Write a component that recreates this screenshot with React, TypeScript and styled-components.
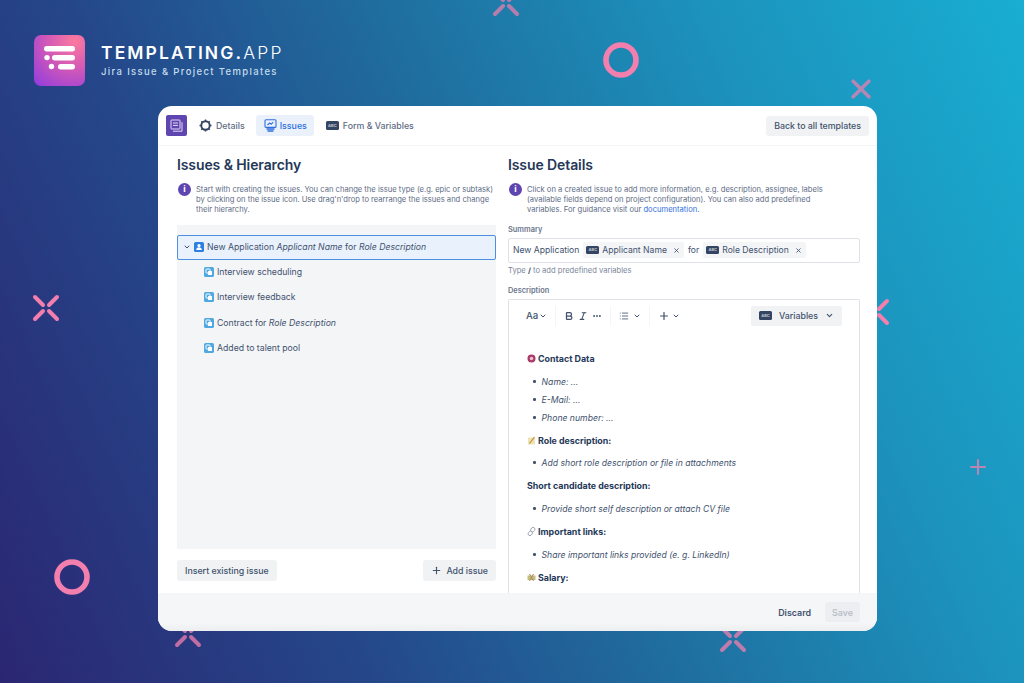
import React from 'react'
import styled, { createGlobalStyle } from 'styled-components'
import { ChevronDown, Plus, X, MoreHorizontal, List, Bold, Italic } from 'lucide-react'

const GlobalStyle = createGlobalStyle`
  html, body { margin: 0; padding: 0; }
  body { font-family: Inter, "Liberation Sans", sans-serif; color: #172b4d; }
`

const Page = styled.div`
  position: relative;
  width: 1024px;
  height: 683px;
  overflow: hidden;
  background: linear-gradient(66deg, #2b2672 0%, #25478a 28%, #1f6fa0 52%, #1c93bd 76%, #19aed2 100%);
  display: flex;
  flex-direction: column;
`

const Mark = styled.svg<{ $x: number; $y: number; $size: number; $fade?: number }>`
  position: absolute;
  left: ${p => p.$x}px;
  top: ${p => p.$y}px;
  width: ${p => p.$size}px;
  height: ${p => p.$size}px;
  opacity: ${p => p.$fade ?? 1};
  stroke: #f27fae;
  fill: none;
`

const Cross = (p: { x: number; y: number; size: number; fade?: number; joined?: boolean }) => (
  <Mark $x={p.x} $y={p.y} $size={p.size} $fade={p.fade} viewBox="0 0 28 28" strokeWidth={p.joined ? 5 : 4} strokeLinecap="round">
    <path d={p.joined
      ? 'M3 3 L25 25 M25 3 L3 25'
      : 'M3 3 L11 11 M25 3 L17 11 M3 25 L11 17 M25 25 L17 17'} />
  </Mark>
)

const Ring = (p: { x: number; y: number }) => (
  <Mark $x={p.x} $y={p.y} $size={36} viewBox="0 0 36 36" strokeWidth={5.6}>
    <circle cx="18" cy="18" r="15" />
  </Mark>
)

const Brand = styled.header`
  display: flex;
  align-items: center;
  gap: 16px;
  padding: 34px 0 0 34px;
  height: 52px;
`

const LogoTile = styled.div`
  width: 51px;
  height: 51px;
  border-radius: 7px;
  background: radial-gradient(circle at 80% 12%, #fb7a9e 0%, #d65bb4 42%, #8f3be0 100%);
  display: flex;
  align-items: center;
  justify-content: center;
`

const BrandText = styled.div`
  display: flex;
  flex-direction: column;
  gap: 3px;
  color: #fff;
`

const BrandName = styled.div`
  font-size: 17.5px;
  line-height: 20px;
  font-weight: 600;
  letter-spacing: 2.1px;
  span { font-weight: 300; letter-spacing: 2.3px; }
`

const BrandTag = styled.div`
  font-size: 9.5px;
  line-height: 12px;
  font-weight: 500;
  letter-spacing: 1.35px;
  color: #c4dcee;
`

const Card = styled.main`
  position: relative;
  margin: 20px 0 0 158px;
  width: 719px;
  height: 525px;
  background: #fff;
  border-radius: 14px;
  overflow: hidden;
  display: flex;
  flex-direction: column;
`

const TopBar = styled.nav`
  height: 39px;
  flex: none;
  display: flex;
  align-items: center;
  padding: 0 8px 0 8px;
  border-bottom: 1px solid #f4f5f7;
`

const AppIcon = styled.div`
  width: 21px;
  height: 21px;
  border-radius: 2px;
  background: #5e45b0;
  display: flex;
  align-items: center;
  justify-content: center;
  margin-right: 4px;
`

const Tab = styled.div<{ $active?: boolean }>`
  display: flex;
  align-items: center;
  gap: ${p => (p.$active ? 3 : 4)}px;
  height: 21px;
  padding: 0 ${p => (p.$active ? 7 : 8)}px 0 8px;
  margin-right: ${p => (p.$active ? 4 : 3)}px;
  border-radius: 3px;
  font-size: 8.8px;
  font-weight: 500;
  color: ${p => (p.$active ? '#2f6fe0' : '#5e6c84')};
  background: ${p => (p.$active ? '#eaf1fb' : 'transparent')};
`

const BackButton = styled.div`
  margin-left: auto;
  height: 20px;
  padding: 0 8px;
  display: flex;
  align-items: center;
  border-radius: 3px;
  background: #f1f2f4;
  font-size: 8.8px;
  font-weight: 500;
  color: #42526e;
`

const Body = styled.div`
  flex: 1;
  min-height: 0;
  display: flex;
  padding: 0 17px 0 19px;
  gap: 12px;
`

const LeftColumn = styled.section`
  width: 319px;
  flex: none;
  display: flex;
  flex-direction: column;
`

const RightColumn = styled.section`
  width: 352px;
  flex: none;
  display: flex;
  flex-direction: column;
  min-height: 0;
`

const Heading = styled.h2`
  margin: 10px 0 0;
  font-size: 14px;
  line-height: 18px;
  font-weight: 600;
  letter-spacing: -0.1px;
  color: #253858;
`

const Note = styled.div`
  display: flex;
  gap: 5px;
  margin-top: 11px;
  padding-left: 1px;
  font-size: 7.6px;
  line-height: 10.2px;
  color: #5e6c84;
  a { color: #2f6fe0; }
`

const NoteText = styled.div`
  max-width: 300px;
`

const InfoDot = styled.div`
  width: 13px;
  height: 13px;
  margin-top: -2px;
  border-radius: 50%;
  background: #5e45b0;
  flex: none;
  display: flex;
  align-items: center;
  justify-content: center;
  color: #fff;
  font-size: 9px;
  font-weight: 700;
`

const TreePanel = styled.div`
  margin-top: 9px;
  height: 324px;
  box-sizing: border-box;
  background: #f4f5f7;
  padding-top: 10px;
`

const TreeRow = styled.div<{ $selected?: boolean }>`
  display: flex;
  align-items: center;
  height: ${p => (p.$selected ? 25 : 25.2)}px;
  box-sizing: border-box;
  padding-left: ${p => (p.$selected ? 5 : 27)}px;
  gap: 3px;
  font-size: 8.7px;
  color: #42526e;
  background: ${p => (p.$selected ? '#e9f1fc' : 'transparent')};
  border: ${p => (p.$selected ? '1.5px solid #4c8fe0' : 'none')};
  border-radius: ${p => (p.$selected ? 2 : 0)}px;
  em { font-style: italic; }
`

const LeftActions = styled.div`
  margin-top: 11px;
  display: flex;
  justify-content: space-between;
`

const GhostButton = styled.div`
  height: 21px;
  padding: 0 8px;
  display: flex;
  align-items: center;
  gap: 4px;
  border-radius: 3px;
  background: #f1f2f4;
  font-size: 8.8px;
  font-weight: 500;
  color: #42526e;
`

const FieldLabel = styled.div<{ $top: number }>`
  margin-top: ${p => p.$top}px;
  font-size: 7.4px;
  line-height: 10px;
  font-weight: 600;
  color: #6b778c;
`

const SummaryBox = styled.div`
  margin-top: 3px;
  height: 25px;
  box-sizing: border-box;
  border: 1px solid #dfe1e6;
  border-radius: 2px;
  display: flex;
  align-items: center;
  padding-left: 4px;
  gap: 3px;
  font-size: 8.6px;
  color: #42526e;
`

const Chip = styled.span`
  display: inline-flex;
  align-items: center;
  gap: 3px;
  height: 16px;
  padding: 0 3px;
  margin: 0 1px;
  border-radius: 2px;
  background: #f4f5f7;
`

const ChipClose = styled(X)`
  margin-left: 3px;
  margin-right: 1px;
`

const AbcTag = styled.span`
  display: inline-flex;
  align-items: center;
  justify-content: center;
  width: 13px;
  height: 8.5px;
  border-radius: 1.5px;
  background: #344563;
  color: #c1c7d0;
  font-size: 4px;
  line-height: 1;
  font-weight: 700;
  font-style: normal;
`

const Hint = styled.div`
  margin-top: 3px;
  font-size: 7.6px;
  line-height: 10px;
  color: #7a869a;
  b { color: #42526e; }
`

const Editor = styled.div`
  margin-top: 3px;
  flex: 1;
  min-height: 0;
  border: 1px solid #dfe1e6;
  border-bottom: none;
  border-radius: 2px 2px 0 0;
  overflow: hidden;
  padding: 6px 17px 0 18px;
`

const Toolbar = styled.div`
  display: flex;
  align-items: center;
  height: 20px;
  margin-left: -1px;
  color: #42526e;
  font-size: 9.6px;
  font-weight: 500;
`

const ToolGroup = styled.div<{ $plain?: boolean; $gap?: number }>`
  display: flex;
  align-items: center;
  gap: ${p => p.$gap ?? 4}px;
  padding-right: 8px;
  margin-right: 8px;
  height: 20px;
  border-right: ${p => (p.$plain ? 'none' : '1px solid #f4f5f7')};
`

const VariablesButton = styled.div`
  margin-left: auto;
  height: 20px;
  padding: 0 8px;
  display: flex;
  align-items: center;
  gap: 7px;
  background: #f1f2f4;
  border-radius: 2px;
  font-size: 8.8px;
  font-weight: 500;
`

const DocHeading = styled.div<{ $top: number }>`
  display: flex;
  align-items: center;
  gap: 2px;
  margin-top: ${p => p.$top}px;
  font-size: 8.9px;
  line-height: 12px;
  font-weight: 700;
  color: #253858;
`

const DocList = styled.ul<{ $top: number }>`
  margin: ${p => p.$top}px 0 0;
  padding: 0 0 0 15px;
  list-style: none;
  font-size: 8.65px;
  font-style: italic;
  color: #42526e;
  li { line-height: 12px; margin-bottom: 6px; }
  li:last-child { margin-bottom: 0; }
  li::before {
    content: '';
    display: inline-block;
    width: 2.6px;
    height: 2.6px;
    border-radius: 50%;
    background: #42526e;
    margin: 0 6px 2px -9px;
    vertical-align: middle;
  }
`

const Footer = styled.footer`
  height: 38px;
  flex: none;
  background: linear-gradient(#f5f6f8 78%, #eceef0);
  display: flex;
  align-items: center;
  justify-content: flex-end;
  gap: 14px;
  padding: 0 17px 0 0;
  font-size: 8.9px;
  font-weight: 600;
  color: #42526e;
`

const SaveButton = styled.div`
  width: 35px;
  height: 20px;
  display: flex;
  align-items: center;
  justify-content: center;
  border-radius: 3px;
  background: #eceef1;
  color: #b3bac5;
  font-weight: 500;
`

const LogoBars = () => (
  <svg width="32" height="28" viewBox="0 0 32 28" fill="#fff">
    <rect x="0" y="0" width="31" height="5.4" rx="2.7" />
    <circle cx="3" cy="11.6" r="2.7" />
    <rect x="8" y="9" width="23" height="5.4" rx="2.7" />
    <circle cx="7.5" cy="20.5" r="2.7" />
    <rect x="14" y="18" width="17" height="5.4" rx="2.7" />
  </svg>
)

const GearIcon = () => (
  <svg width="13" height="13" viewBox="0 0 13 13" fill="none" stroke="#344563" strokeWidth="1.9">
    <circle cx="6.5" cy="6.5" r="4.2" />
    <path d="M6.5 0.5v1.6M6.5 10.9v1.6M0.5 6.5h1.6M10.9 6.5h1.6M2.3 2.3l1.1 1.1M9.6 9.6l1.1 1.1M2.3 10.7l1.1-1.1M9.6 3.4l1.1-1.1" strokeWidth="1.5" />
  </svg>
)

const ScreenIcon = () => (
  <svg width="13" height="13" viewBox="0 0 13 13" fill="none" stroke="#2f6fe0" strokeWidth="1.1">
    <rect x="1" y="0.8" width="11" height="7.6" rx="1" />
    <path d="M3.5 6l2.2-2 1.5 1.2 2-2" />
    <path d="M2.5 10h8M3.5 12h6" strokeWidth="1.4" />
  </svg>
)

const AppGlyph = () => (
  <svg width="13" height="13" viewBox="0 0 13 13" fill="none" stroke="#e3dcf7" strokeWidth="1">
    <rect x="1" y="1" width="9" height="9" rx="0.6" />
    <path d="M3 4h5M3 6.4h5M12 3.2v9h-9" />
  </svg>
)

const StoryIcon = () => (
  <svg width="10" height="10" viewBox="0 0 10 10">
    <rect width="10" height="10" rx="1.6" fill="#2e7fe4" />
    <circle cx="5" cy="3.6" r="1.6" fill="#fff" />
    <path d="M2.2 8c0-1.9 1.3-2.7 2.8-2.7S7.8 6.1 7.8 8z" fill="#fff" />
  </svg>
)

const SubtaskIcon = () => (
  <svg width="10" height="10" viewBox="0 0 10 10" fill="none">
    <rect width="10" height="10" rx="1.6" fill="#4fa8e0" />
    <rect x="2" y="2" width="4" height="4" rx="0.5" stroke="#fff" strokeWidth="1" />
    <rect x="4" y="4" width="4" height="4" rx="0.5" fill="#fff" />
  </svg>
)

const ContactEmoji = () => (
  <svg width="9" height="9" viewBox="0 0 9 9">
    <circle cx="4.5" cy="4.5" r="4" fill="#a83a6a" />
    <circle cx="4.5" cy="4.5" r="1.8" fill="#f0c0cc" />
  </svg>
)

const MemoEmoji = () => (
  <svg width="9" height="9" viewBox="0 0 9 9">
    <rect x="1" y="1.5" width="7" height="7" rx="0.6" fill="#efe3b4" />
    <path d="M2.5 7.5L7.5 1" stroke="#b98f3e" strokeWidth="1.2" />
  </svg>
)

const LinkEmoji = () => (
  <svg width="9" height="9" viewBox="0 0 9 9" fill="none" stroke="#9aa3b2" strokeWidth="0.9">
    <rect x="3.9" y="0.2" width="3.6" height="5" rx="1.8" transform="rotate(40 5.7 2.7)" />
    <rect x="1.5" y="3.8" width="3.6" height="5" rx="1.8" transform="rotate(40 3.3 6.3)" />
  </svg>
)

const MoneyEmoji = () => (
  <svg width="9" height="9" viewBox="0 0 9 9">
    <path d="M0.5 2.5h8v4.5h-8z" fill="#c4bd83" />
    <path d="M2.5 1l4 7M6.5 1l-4 7" stroke="#a8894e" strokeWidth="1" />
  </svg>
)

const treeItems: React.ReactNode[] = [
  'Interview scheduling',
  'Interview feedback',
  <>Contract for <em>Role Description</em></>,
  'Added to talent pool',
]

export default function App() {
  return (
    <Page>
      <GlobalStyle />
      <Cross x={492} y={-11} size={28} fade={0.7} />
      <Ring x={603} y={42} />
      <Cross x={851} y={79} size={20} fade={0.72} joined />
      <Cross x={32} y={294} size={28} />
      <Cross x={862} y={298} size={28} />
      <Mark $x={970} $y={459} $size={16} $fade={0.75} viewBox="0 0 16 16" strokeWidth={2} strokeLinecap="round">
        <path d="M8 1v14M1 8h14" />
      </Mark>
      <Ring x={54} y={559} />
      <Cross x={174} y={620} size={28} fade={0.75} />
      <Cross x={719} y={625} size={28} fade={0.75} />

      <Brand>
        <LogoTile><LogoBars /></LogoTile>
        <BrandText>
          <BrandName>TEMPLATING.<span>APP</span></BrandName>
          <BrandTag>Jira Issue &amp; Project Templates</BrandTag>
        </BrandText>
      </Brand>

      <Card>
        <TopBar>
          <AppIcon><AppGlyph /></AppIcon>
          <Tab><GearIcon /> Details</Tab>
          <Tab $active><ScreenIcon /> Issues</Tab>
          <Tab><AbcTag>ABC</AbcTag> Form &amp; Variables</Tab>
          <BackButton>Back to all templates</BackButton>
        </TopBar>

        <Body>
          <LeftColumn>
            <Heading>Issues &amp; Hierarchy</Heading>
            <Note>
              <InfoDot>i</InfoDot>
              <NoteText>
                Start with creating the issues. You can change the issue type (e.g. epic or subtask) by clicking on the
                issue icon. Use drag'n'drop to rearrange the issues and change their hierarchy.
              </NoteText>
            </Note>
            <TreePanel>
              <TreeRow $selected>
                <ChevronDown size={8} strokeWidth={3} />
                <StoryIcon />
                <span>New Application <em>Applicant Name</em> for <em>Role Description</em></span>
              </TreeRow>
              {treeItems.map((item, i) => (
                <TreeRow key={i}>
                  <SubtaskIcon />
                  <span>{item}</span>
                </TreeRow>
              ))}
            </TreePanel>
            <LeftActions>
              <GhostButton>Insert existing issue</GhostButton>
              <GhostButton><Plus size={11} strokeWidth={2.4} /> Add issue</GhostButton>
            </LeftActions>
          </LeftColumn>

          <RightColumn>
            <Heading>Issue Details</Heading>
            <Note>
              <InfoDot>i</InfoDot>
              <NoteText>
                Click on a created issue to add more information, e.g. description, assignee, labels (available fields
                depend on project configuration). You can also add predefined variables. For guidance visit
                our <a>documentation.</a>
              </NoteText>
            </Note>
            <FieldLabel $top={9}>Summary</FieldLabel>
            <SummaryBox>
              New Application
              <Chip><AbcTag>ABC</AbcTag> Applicant Name <ChipClose size={7} strokeWidth={3} /></Chip>
              for
              <Chip><AbcTag>ABC</AbcTag> Role Description <ChipClose size={7} strokeWidth={3} /></Chip>
            </SummaryBox>
            <Hint>Type <b>/</b> to add predefined variables</Hint>
            <FieldLabel $top={10}>Description</FieldLabel>
            <Editor>
              <Toolbar>
                <ToolGroup $gap={1}>Aa<ChevronDown size={8} strokeWidth={3} /></ToolGroup>
                <ToolGroup>
                  <Bold size={10} strokeWidth={3} />
                  <Italic size={10} strokeWidth={2.6} />
                  <MoreHorizontal size={10} strokeWidth={2.6} />
                </ToolGroup>
                <ToolGroup>
                  <List size={10} strokeWidth={2} />
                  <ChevronDown size={8} strokeWidth={3} />
                </ToolGroup>
                <ToolGroup $plain $gap={2}>
                  <Plus size={12} strokeWidth={2.4} />
                  <ChevronDown size={8} strokeWidth={3} />
                </ToolGroup>
                <VariablesButton>
                  <AbcTag>ABC</AbcTag> Variables <ChevronDown size={9} strokeWidth={3} />
                </VariablesButton>
              </Toolbar>
              <DocHeading $top={27}><ContactEmoji /> Contact Data</DocHeading>
              <DocList $top={11}>
                <li>Name: ...</li>
                <li>E-Mail: ...</li>
                <li>Phone number: ...</li>
              </DocList>
              <DocHeading $top={11}><MemoEmoji /> Role description:</DocHeading>
              <DocList $top={10}>
                <li>Add short role description or file in attachments</li>
              </DocList>
              <DocHeading $top={11}>Short candidate description:</DocHeading>
              <DocList $top={11}>
                <li>Provide short self description or attach CV file</li>
              </DocList>
              <DocHeading $top={11}><LinkEmoji /> Important links:</DocHeading>
              <DocList $top={11}>
                <li>Share important links provided (e. g. LinkedIn)</li>
              </DocList>
              <DocHeading $top={11}><MoneyEmoji /> Salary:</DocHeading>
            </Editor>
          </RightColumn>
        </Body>

        <Footer>
          <span>Discard</span>
          <SaveButton>Save</SaveButton>
        </Footer>
      </Card>
    </Page>
  )
}
